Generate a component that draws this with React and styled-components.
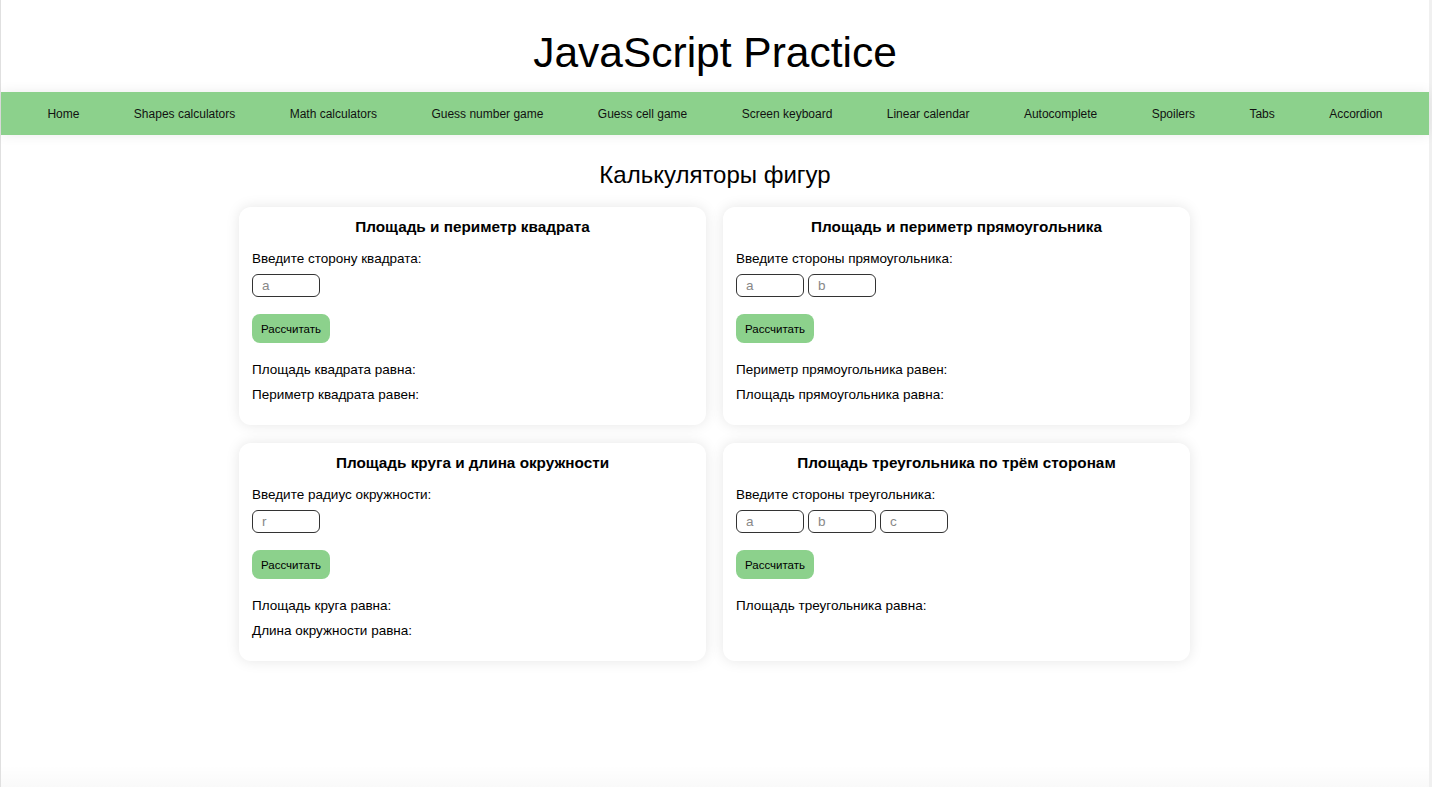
import React from 'react';
import styled, { createGlobalStyle } from 'styled-components';

const GlobalStyle = createGlobalStyle`
  html, body {
    margin: 0;
    padding: 0;
    background: #ffffff;
    font-family: 'Liberation Sans', Arial, sans-serif;
    color: #000;
  }
`;

const green = '#8cd18c';

const StyledPage = styled.div`
  min-height: 100vh;
  box-sizing: border-box;
  border-left: 1px solid #e0e0e0;
  border-right: 3px solid #f0f0f0;
  display: flex;
  flex-direction: column;
`;

const StyledHeader = styled.header`
  padding-top: 29px;

  h1 {
    margin: 0;
    font-size: 42.5px;
    line-height: 48px;
    font-weight: 400;
    text-align: center;
  }
`;

const StyledNavbar = styled.nav`
  margin-top: 15px;
  height: 43px;
  background-color: ${green};
  box-shadow: 0 0 12px rgba(0, 0, 0, 0.08);
  display: flex;
  justify-content: center;
  align-items: center;
  gap: 54.4px;

  a {
    font-size: 12px;
    color: #111;
    text-decoration: none;
    white-space: nowrap;
  }
`;

const StyledMain = styled.main`
  flex: 1;
  padding-top: 26px;

  h2 {
    margin: 0 0 18px;
    font-size: 24px;
    line-height: 28px;
    font-weight: 400;
    text-align: center;
  }
`;

const StyledGrid = styled.div`
  display: grid;
  grid-template-columns: repeat(2, 467px);
  column-gap: 17px;
  row-gap: 18px;
  justify-content: center;
  margin-left: -1px;
`;

const StyledCard = styled.section`
  background: #fff;
  border-radius: 12px;
  box-shadow: 0 0 14px rgba(0, 0, 0, 0.1);
  padding: 11px 13px 23px;
  box-sizing: border-box;

  h3 {
    margin: 0 0 16px;
    font-size: 15.3px;
    line-height: 17px;
    font-weight: 700;
    text-align: center;
  }
`;

const StyledText = styled.p`
  margin: 0;
  font-size: 13.5px;
  line-height: 15px;
`;

const StyledInputs = styled.div`
  margin-top: 8px;
  display: flex;
  gap: 4px;
`;

const StyledInput = styled.input`
  width: 68px;
  height: 23px;
  box-sizing: border-box;
  border: 1px solid #333;
  border-radius: 6px;
  padding: 0 9px;
  font-family: inherit;
  font-size: 13.5px;
  outline: none;

  &::placeholder {
    color: #888;
  }
`;

const StyledButton = styled.button`
  display: block;
  margin-top: 17px;
  height: 29px;
  padding: 0 9px;
  border: 0;
  border-radius: 8px;
  background-color: ${green};
  color: #000;
  font-family: inherit;
  font-size: 11.5px;
  cursor: pointer;
`;

const StyledResults = styled.div`
  margin-top: 19px;
  display: flex;
  flex-direction: column;
  gap: 10px;
`;

const StyledFooter = styled.footer`
  height: 22px;
  background: linear-gradient(to bottom, rgba(0, 0, 0, 0), rgba(0, 0, 0, 0.025));
`;

const links = [
  'Home',
  'Shapes calculators',
  'Math calculators',
  'Guess number game',
  'Guess cell game',
  'Screen keyboard',
  'Linear calendar',
  'Autocomplete',
  'Spoilers',
  'Tabs',
  'Accordion',
];

const calculators = [
  {
    title: 'Площадь и периметр квадрата',
    label: 'Введите сторону квадрата:',
    inputs: ['a'],
    results: ['Площадь квадрата равна:', 'Периметр квадрата равен:'],
  },
  {
    title: 'Площадь и периметр прямоугольника',
    label: 'Введите стороны прямоугольника:',
    inputs: ['a', 'b'],
    results: ['Периметр прямоугольника равен:', 'Площадь прямоугольника равна:'],
  },
  {
    title: 'Площадь круга и длина окружности',
    label: 'Введите радиус окружности:',
    inputs: ['r'],
    results: ['Площадь круга равна:', 'Длина окружности равна:'],
  },
  {
    title: 'Площадь треугольника по трём сторонам',
    label: 'Введите стороны треугольника:',
    inputs: ['a', 'b', 'c'],
    results: ['Площадь треугольника равна:'],
  },
];

function Calculator({ title, label, inputs, results }) {
  return (
    <StyledCard>
      <h3>{title}</h3>
      <StyledText>{label}</StyledText>
      <StyledInputs>
        {inputs.map((p) => (
          <StyledInput key={p} placeholder={p} />
        ))}
      </StyledInputs>
      <StyledButton>Рассчитать</StyledButton>
      <StyledResults>
        {results.map((r) => (
          <StyledText key={r}>{r}</StyledText>
        ))}
      </StyledResults>
    </StyledCard>
  );
}

function App() {
  return (
    <>
      <GlobalStyle />
      <StyledPage>
        <StyledHeader>
          <h1>JavaScript Practice</h1>
        </StyledHeader>
        <StyledNavbar>
          {links.map((l) => (
            <a key={l} href="#">
              {l}
            </a>
          ))}
        </StyledNavbar>
        <StyledMain>
          <h2>Калькуляторы фигур</h2>
          <StyledGrid>
            {calculators.map((c) => (
              <Calculator key={c.title} {...c} />
            ))}
          </StyledGrid>
        </StyledMain>
        <StyledFooter />
      </StyledPage>
    </>
  );
}

export default App;
